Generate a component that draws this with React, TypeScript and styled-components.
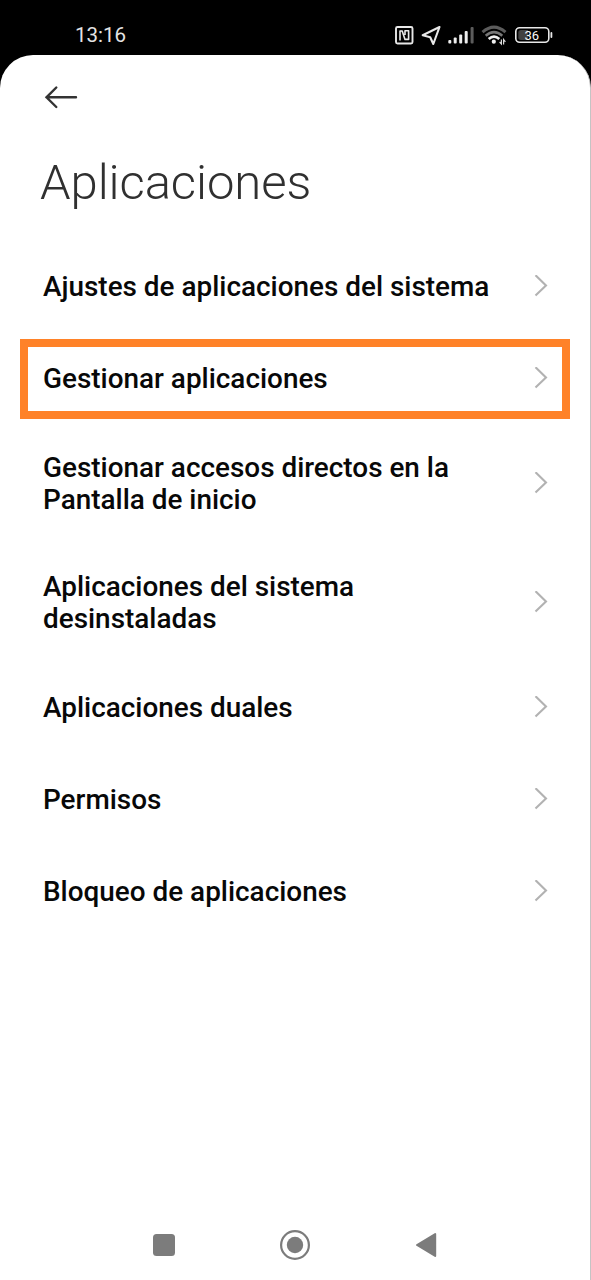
import React from "react";
import styled, { createGlobalStyle } from "styled-components";

const GlobalStyle = createGlobalStyle`
  *, *::before, *::after { box-sizing: border-box; }
  body { margin: 0; background: #000; font-family: Roboto, "Liberation Sans", sans-serif; }
`;

const Phone = styled.div`
  display: flex;
  flex-direction: column;
  width: 591px;
  height: 1280px;
  overflow: hidden;
  background: #000;
`;

const StatusBar = styled.header`
  display: flex;
  flex: none;
  align-items: center;
  justify-content: space-between;
  height: 55px;
  padding: 14px 38px 0 75px;
  color: #e4e4e4;
`;

const Clock = styled.time`
  font-size: 20.5px;
  line-height: 24px;
`;

const StatusIcons = styled.div`
  display: flex;
  align-items: center;
  height: 24px;
`;

const Screen = styled.main`
  display: flex;
  flex: 1;
  flex-direction: column;
  border-right: 1px solid #c4c4c4;
  border-radius: 33px 33px 0 0;
  background: #fff;
`;

const BackButton = styled.button`
  display: flex;
  align-self: flex-start;
  margin: 30px 0 0 44px;
  padding: 0;
  border: 0;
  background: none;
`;

const Title = styled.h1`
  margin: 44px 0 0 40px;
  color: #303030;
  font-size: 49px;
  font-weight: 300;
  letter-spacing: -0.08px;
  line-height: 60px;
`;

const Menu = styled.nav`
  display: flex;
  flex-direction: column;
  margin-top: 27px;
`;

const MenuRow = styled.div<{ $tall?: boolean }>`
  display: flex;
  align-items: center;
  height: ${({ $tall }) => ($tall ? "118.5px" : "92px")};
  padding: 0 20px;
`;

const RowFrame = styled.div<{ $marked?: boolean }>`
  display: flex;
  flex: 1;
  align-items: center;
  justify-content: space-between;
  height: 80px;
  padding: 0 14px 0 15px;
  border: 8px solid ${({ $marked }) => ($marked ? "#ff8228" : "transparent")};
  margin-top: 2px;
`;

const Label = styled.span`
  color: #080808;
  font-size: 27.9px;
  font-weight: 500;
  line-height: 32px;
  white-space: pre-line;
`;

const NavBar = styled.footer`
  display: flex;
  align-items: center;
  height: 71px;
  margin-top: auto;
  padding-left: 152px;
`;

const NavSlot = styled.div<{ $gap?: number }>`
  display: flex;
  margin-left: ${({ $gap = 0 }) => $gap}px;
`;

const StatusGlyphs = () => (
  <svg width="160" height="24" viewBox="393 22 160 24" fill="none">
    <g stroke="#e8e8e8" strokeWidth="1.9">
      <rect x="396" y="26" width="16.5" height="16.5" rx="1.5" />
      <path d="M400 39.6V30H402.2L405 38.4H408.6V29.8H405V34" strokeWidth="1.6" strokeLinejoin="round" />
      <path d="M439.5 26L422.7 34.3L430.2 36.2L433.3 43Z" strokeWidth="2.1" strokeLinejoin="round" />
    </g>
    <g fill="#ededed">
      <rect x="448.3" y="39" width="3" height="3.5" rx="1" />
      <rect x="453.7" y="36.5" width="3" height="6" rx="1" />
      <rect x="459.2" y="33.5" width="3" height="9" rx="1" />
      <rect x="464.7" y="30" width="3" height="12.5" rx="1" />
      <rect x="470.6" y="26" width="3" height="16.5" rx="1" fill="#5c5c5c" />
    </g>
    <path d="M482.5 31.2Q494 21 505.5 31.2" stroke="#5c5c5c" strokeWidth="3" />
    <path d="M485.7 34.7Q494 27.5 502.3 34.7" stroke="#777" strokeWidth="2.5" />
    <path d="M488.7 38Q494 33.2 499.3 38" stroke="#f0f0f0" strokeWidth="2.7" />
    <circle cx="493.8" cy="40.7" r="2.1" fill="#f0f0f0" />
    <path d="M501.4 38.5V43L499.6 41M503.6 43.5V38.5L505.4 40.8" stroke="#d8d8d8" strokeWidth="1.2" />
    <rect x="515.8" y="26.7" width="33" height="14.6" rx="3.8" stroke="#e8e8e8" strokeWidth="1.6" />
    <path d="M521 29H528V39H521Q518.3 39 518.3 36.5V31.5Q518.3 29 521 29Z" fill="#414141" />
    <path d="M551.4 32V36" stroke="#e8e8e8" strokeWidth="1.8" strokeLinecap="round" />
    <text x="531.8" y="38.7" fill="#f8f8f8" textAnchor="middle" fontFamily="Roboto, sans-serif" fontSize="13" fontWeight="400">36</text>
  </svg>
);

const ArrowLeft = () => (
  <svg width="34" height="24" viewBox="0 0 34 24" fill="none" stroke="#333" strokeWidth="2.4" strokeLinecap="round">
    <path d="M2.5 12.3H32M12.3 2.5L2.5 12.3L12.3 22" />
  </svg>
);

const Chevron = () => (
  <svg width="14" height="24" viewBox="0 1 14 24" fill="none" stroke="#b2b2b2" strokeWidth="2.1">
    <path d="M1.5 1.2L12 11.4L1.5 21.6" />
  </svg>
);

const items: { label: string; tall?: boolean; marked?: boolean }[] = [
  { label: "Ajustes de aplicaciones del sistema" },
  { label: "Gestionar aplicaciones", marked: true },
  { label: "Gestionar accesos directos en la\nPantalla de inicio", tall: true },
  { label: "Aplicaciones del sistema\ndesinstaladas", tall: true },
  { label: "Aplicaciones duales" },
  { label: "Permisos" },
  { label: "Bloqueo de aplicaciones" },
];

export default function App() {
  return (
    <Phone>
      <GlobalStyle />
      <StatusBar>
        <Clock>13:16</Clock>
        <StatusIcons><StatusGlyphs /></StatusIcons>
      </StatusBar>
      <Screen>
        <BackButton aria-label="Atrás"><ArrowLeft /></BackButton>
        <Title>Aplicaciones</Title>
        <Menu>
          {items.map((item) => (
            <MenuRow key={item.label} $tall={item.tall}>
              <RowFrame $marked={item.marked}>
                <Label>{item.label}</Label>
                <Chevron />
              </RowFrame>
            </MenuRow>
          ))}
        </Menu>
        <NavBar>
          <NavSlot>
            <svg width="24" height="24"><rect x="1" y="1" width="22" height="22" rx="3.5" fill="#7c7c7c" /></svg>
          </NavSlot>
          <NavSlot $gap={104}>
            <svg width="30" height="30">
              <circle cx="15" cy="15" r="13.9" fill="none" stroke="#7c7c7c" strokeWidth="2.2" />
              <circle cx="15" cy="15" r="8.2" fill="#7c7c7c" />
            </svg>
          </NavSlot>
          <NavSlot $gap={105}>
            <svg width="24" height="28"><path d="M2 14L20.2 3V25Z" fill="#7c7c7c" stroke="#7c7c7c" strokeWidth="2" strokeLinejoin="round" /></svg>
          </NavSlot>
        </NavBar>
      </Screen>
    </Phone>
  );
}
